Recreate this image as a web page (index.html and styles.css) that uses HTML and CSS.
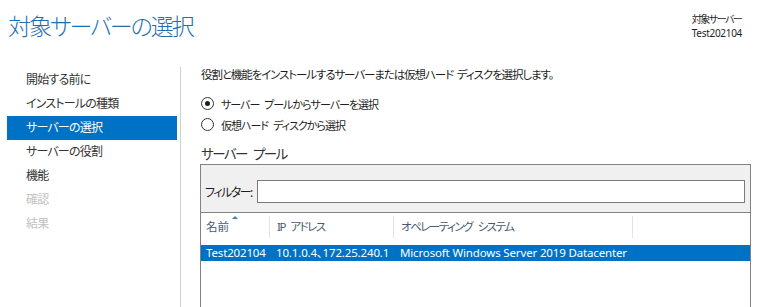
FILE: index.html
```html
<!DOCTYPE html>
<html lang="ja">
  <head>
    <meta charset="UTF-8" />
    <title>対象サーバーの選択</title>
    <link rel="stylesheet" href="styles.css">
  </head>
  <body>
    <div class="wizard-header">
      <h1 class="wizard-title">対象サーバーの選択</h1>
      <div class="target-info">
        <div class="target-label">対象サーバー</div>
        <div class="target-name">Test202104</div>
      </div>
    </div>

    <div class="wizard-main">
      <ul class="step-nav">
        <li>開始する前に</li>
        <li>インストールの種類</li>
        <li class="active">サーバーの選択</li>
        <li>サーバーの役割</li>
        <li>機能</li>
        <li class="disabled">確認</li>
        <li class="disabled">結果</li>
      </ul>

      <div class="wizard-content">
        <p class="description">役割と機能をインストールするサーバーまたは仮想ハード ディスクを選択します。</p>

        <div class="radio-row">
          <span class="radio checked"></span>
          <span>サーバー プールからサーバーを選択</span>
        </div>
        <div class="radio-row">
          <span class="radio"></span>
          <span>仮想ハード ディスクから選択</span>
        </div>

        <h2 class="pool-title">サーバー プール</h2>

        <div class="pool-box">
          <div class="filter-bar">
            <label>フィルター:</label>
            <div class="filter-input"></div>
          </div>

          <div class="pool-grid pool-head">
            <div class="col sorted">名前<span class="sort-arrow"></span></div>
            <div class="col">IP アドレス</div>
            <div class="col">オペレーティング システム</div>
            <div class="col"></div>
          </div>

          <div class="pool-grid pool-row selected">
            <div class="col">Test202104</div>
            <div class="col">10.1.0.4、172.25.240.1</div>
            <div class="col">Microsoft Windows Server 2019 Datacenter</div>
            <div class="col"></div>
          </div>
        </div>
      </div>
    </div>
  </body>
</html>
```

FILE: styles.css
```css
body {
  margin: 0;
  background: #ffffff;
  font-family: "Noto Sans", "Noto Sans CJK JP", sans-serif;
  font-feature-settings: "palt";
  font-size: 12px;
  color: #1e1e1e;
  overflow: hidden;
}

.wizard-header {
  height: 67px;
  box-sizing: border-box;
  display: flex;
  justify-content: space-between;
  padding: 10px 22px 0 8px;
}

.wizard-title {
  margin: 0;
  font-size: 23px;
  line-height: 32px;
  font-weight: 300;
  letter-spacing: -2px;
  color: #1f6fb0;
}

.target-info {
  margin-top: 2px;
  font-size: 10px;
  line-height: 14px;
  color: #1e1e1e;
}

.target-label {
  letter-spacing: -1.5px;
}

.target-name {
  letter-spacing: -0.3px;
}

.wizard-main {
  display: flex;
}

.step-nav {
  list-style: none;
  margin: 0;
  width: 181px;
  box-sizing: border-box;
  padding: 1px 3px 0 7px;
  border-right: 1px solid #d0d0d0;
  height: 240px;
}

.step-nav li {
  height: 24px;
  line-height: 24px;
  padding-left: 19px;
  letter-spacing: -0.8px;
  color: #333333;
}

.step-nav li.active {
  background-color: #0072c6;
  color: #ffffff;
}

.step-nav li.disabled {
  color: #c2c2c2;
}

.wizard-content {
  flex: 1;
  padding: 0 13px 0 20px;
}

.description {
  margin: 0 0 10px;
  font-size: 11.5px;
  line-height: 16px;
  letter-spacing: -1.1px;
  word-spacing: 2px;
}

.radio-row {
  display: flex;
  align-items: center;
  gap: 7px;
  height: 21px;
  font-size: 11px;
  letter-spacing: -1px;
  word-spacing: 3px;
}

.radio {
  width: 11px;
  height: 11px;
  border: 1px solid #333333;
  border-radius: 50%;
  display: flex;
  align-items: center;
  justify-content: center;
}

.radio.checked::after {
  content: "";
  width: 5px;
  height: 5px;
  border-radius: 50%;
  background: #1e1e1e;
}

.pool-title {
  margin: 9px 0 0;
  font-size: 13.5px;
  line-height: 20px;
  font-weight: 400;
  letter-spacing: -1.5px;
  word-spacing: 4px;
  color: #333333;
}

.pool-box {
  margin-left: -1px;
  border: 1px solid #828282;
  height: 142px;
  background: #ffffff;
}

.filter-bar {
  display: flex;
  align-items: center;
  gap: 5px;
  background: #f0f0f0;
  padding: 15px 5px 9px 4px;
  border-bottom: 1px solid #828282;
  letter-spacing: -1.5px;
}

.filter-input {
  flex: 1;
  height: 21px;
  border: 1px solid #7a7a7a;
  background: #ffffff;
}

.pool-grid {
  display: grid;
  grid-template-columns: 68px 124px 239px 1fr;
}

.pool-head {
  height: 28px;
  padding-top: 3px;
  box-sizing: border-box;
  font-size: 11.5px;
  letter-spacing: -1.5px;
  word-spacing: 4px;
}

.pool-head .col {
  position: relative;
  height: 22px;
  line-height: 22px;
  padding-left: 7px;
  color: #4a5a72;
  border-left: 1px solid #e3e3e3;
}

.pool-head .col:first-child {
  border-left: none;
  padding-left: 5px;
  letter-spacing: 0;
}

.sort-arrow {
  position: absolute;
  left: 31px;
  top: 0;
  width: 0;
  height: 0;
  border-left: 3px solid transparent;
  border-right: 3px solid transparent;
  border-bottom: 3px solid #3c7fb8;
}

.pool-row {
  margin-top: 4px;
  height: 16px;
  line-height: 16px;
  font-size: 11.5px;
  letter-spacing: -0.15px;
}

.pool-row .col {
  padding-left: 7px;
  white-space: nowrap;
}

.pool-row .col:first-child {
  padding-left: 5px;
}

.pool-row.selected {
  background-color: #0072c6;
  color: #ffffff;
}
```
